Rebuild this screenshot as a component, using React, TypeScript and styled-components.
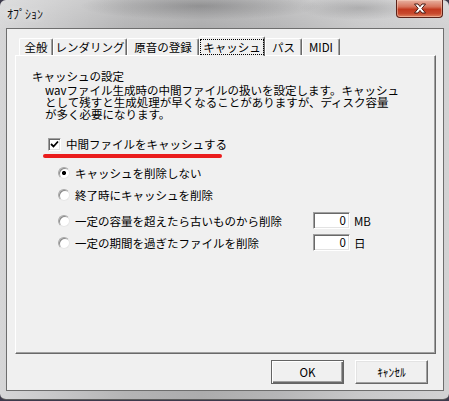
import styled, { createGlobalStyle } from "styled-components";

const GlobalStyle = createGlobalStyle`
  html, body {
    margin: 0;
    padding: 0;
    background: #3d3a4c;
  }
  body {
    font-family: "Noto Sans CJK JP", "Noto Sans", sans-serif;
    font-size: 11.5px;
    color: #000;
  }
`;

const tabs = [
  { label: "全般", width: 34 },
  { label: "レンダリング", width: 74 },
  { label: "原音の登録", width: 72 },
  { label: "キャッシュ", width: 66, active: true },
  { label: "パス", width: 37 },
  { label: "MIDI", width: 38 },
];

const radios = [
  { label: "キャッシュを削除しない", checked: true, top: 6 },
  { label: "終了時にキャッシュを削除", top: 5 },
  { label: "一定の容量を超えたら古いものから削除", top: 9, value: "0", unit: "MB" },
  { label: "一定の期間を過ぎたファイルを削除", top: 5, value: "0", unit: "日" },
];

function CloseGlyph() {
  return (
    <svg width="14" height="11" viewBox="0 0 14 11">
      <path
        d="M1.5 1 H5 L7 3.6 L9 1 H12.5 L8.8 5.5 L12.5 10 H9 L7 7.4 L5 10 H1.5 L5.2 5.5 Z"
        fill="#fff"
        stroke="#4a1a12"
        strokeWidth="1"
        strokeLinejoin="round"
      />
    </svg>
  );
}

function CheckGlyph() {
  return (
    <svg width="9" height="9" viewBox="0 0 9 9">
      <path d="M1 4 L3.5 6.5 L8 1.5" fill="none" stroke="#000" strokeWidth="1.8" />
    </svg>
  );
}

export default function App() {
  return (
    <>
      <GlobalStyle />
      <Window>
        <TitleBar>
          <Title>ｵﾌﾟｼｮﾝ</Title>
          <CloseButton>
            <CloseGlyph />
          </CloseButton>
        </TitleBar>
        <Client>
          <TabStrip>
            {tabs.map((t) => (
              <Tab key={t.label} $width={t.width} $active={!!t.active}>
                <TabLabel $active={!!t.active}>{t.label}</TabLabel>
              </Tab>
            ))}
          </TabStrip>
          <Panel>
            <GroupLabel>キャッシュの設定</GroupLabel>
            <Description>
              <DescLine>wavファイル生成時の中間ファイルの扱いを設定します。キャッシュ</DescLine>
              <DescLine>として残すと生成処理が早くなることがありますが、ディスク容量</DescLine>
              <DescLine>が多く必要になります。</DescLine>
            </Description>
            <CheckRow>
              <CheckBox>
                <CheckGlyph />
              </CheckBox>
              <span>中間ファイルをキャッシュする</span>
            </CheckRow>
            <Underline />
            {radios.map((r) => (
              <RadioRow key={r.label} $top={r.top}>
                <RadioOption>
                  <Radio $checked={!!r.checked} />
                  <span>{r.label}</span>
                </RadioOption>
                {r.value !== undefined && (
                  <>
                    <Edit>{r.value}</Edit>
                    <Unit>{r.unit}</Unit>
                  </>
                )}
              </RadioRow>
            ))}
          </Panel>
          <ButtonRow>
            <Button $default>OK</Button>
            <Button>ｷｬﾝｾﾙ</Button>
          </ButtonRow>
        </Client>
      </Window>
    </>
  );
}

const Window = styled.div`
  width: 449px;
  height: 400px;
  box-sizing: border-box;
  display: flex;
  flex-direction: column;
  border-radius: 6px;
  border-bottom: 1px solid #5c5c5c;
  overflow: hidden;
  background:
    radial-gradient(ellipse 120px 14px at 200px 6px, rgba(70, 70, 72, 0.35), rgba(70, 70, 72, 0)),
    radial-gradient(ellipse 60px 12px at 360px 8px, rgba(70, 70, 72, 0.25), rgba(70, 70, 72, 0)),
    linear-gradient(to bottom, rgba(255, 255, 255, 0.2), rgba(255, 255, 255, 0) 30px),
    linear-gradient(
      to right,
      #d6d6d7 0%,
      #c8c8c9 12%,
      #b4b4b5 28%,
      #acacad 45%,
      #b6b6b7 62%,
      #c8c8c9 80%,
      #d2d2d3 100%
    );
`;

const TitleBar = styled.div`
  height: 28px;
  display: flex;
  justify-content: space-between;
  align-items: flex-start;
  padding: 0 6px 0 7px;
  flex-shrink: 0;
`;

const Title = styled.div`
  margin-top: 7px;
  font-size: 12px;
  line-height: 14px;
  color: #111;
  text-shadow: 0 0 6px rgba(255, 255, 255, 0.9);
`;

const CloseButton = styled.div`
  width: 47px;
  height: 18px;
  box-sizing: border-box;
  display: flex;
  align-items: center;
  justify-content: center;
  border: 1px solid #5b2219;
  border-top: none;
  border-radius: 0 0 4px 4px;
  background: linear-gradient(
    to bottom,
    #e8b2a2 0%,
    #d7735b 40%,
    #c2391f 55%,
    #c84a2e 80%,
    #e08462 100%
  );
  box-shadow: inset 0 0 0 1px rgba(255, 220, 200, 0.45);
`;

const Client = styled.div`
  flex: 1;
  margin: 0 5px 8px 6px;
  border: 1px solid #6e6e6e;
  background: #f0f0f0;
  padding: 7px 7px 0 8px;
  display: flex;
  flex-direction: column;
`;

const TabStrip = styled.div`
  height: 19px;
  display: flex;
  align-items: flex-end;
  padding-left: 4px;
`;

const Tab = styled.div<{ $width: number; $active: boolean }>`
  width: ${(p) => p.$width}px;
  height: ${(p) => (p.$active ? 20 : 17)}px;
  margin-bottom: ${(p) => (p.$active ? -1 : 0)}px;
  position: relative;
  z-index: ${(p) => (p.$active ? 1 : 0)};
  box-sizing: border-box;
  display: flex;
  justify-content: center;
  align-items: ${(p) => (p.$active ? "flex-start" : "center")};
  padding-top: ${(p) => (p.$active ? 2 : 0)}px;
  background: #f0f0f0;
  border-top: 1px solid #fff;
  border-left: 1px solid #fff;
  border-right: 1px solid #696969;
  border-radius: 2px 2px 0 0;
  box-shadow: inset -1px 0 0 #a0a0a0;
  line-height: 14px;
  white-space: nowrap;
`;

const TabLabel = styled.span<{ $active: boolean }>`
  padding: 0 2px;
  border: 1px dotted ${(p) => (p.$active ? "#000" : "transparent")};
`;

const Panel = styled.div`
  width: 421px;
  height: 299px;
  box-sizing: border-box;
  border-top: 1px solid #fff;
  border-left: 1px solid #fff;
  border-right: 1px solid #696969;
  border-bottom: 1px solid #696969;
  box-shadow: inset -1px -1px 0 #a0a0a0;
  padding: 14px 0 0 16px;
  display: flex;
  flex-direction: column;
  align-items: flex-start;
`;

const GroupLabel = styled.div`
  height: 13px;
  line-height: 13px;
`;

const Description = styled.div`
  margin: 1px 0 0 13px;
  display: flex;
  flex-direction: column;
  white-space: nowrap;
`;

const DescLine = styled.div`
  height: 12px;
  line-height: 12px;
`;

const CheckRow = styled.div`
  margin: 18px 0 0 16px;
  height: 13px;
  display: flex;
  align-items: center;
  gap: 5px;
  line-height: 13px;
`;

const CheckBox = styled.div`
  width: 13px;
  height: 13px;
  box-sizing: border-box;
  display: flex;
  align-items: center;
  justify-content: center;
  background: #fff;
  border: 1px solid;
  border-color: #a0a0a0 #fff #fff #a0a0a0;
  box-shadow: inset 1px 1px 0 #696969, inset -1px -1px 0 #e3e3e3;
`;

const Underline = styled.div`
  margin: 3px 0 0 11px;
  width: 179px;
  height: 4px;
  border-radius: 2px;
  background: #ea1c1c;
`;

const RadioRow = styled.div<{ $top: number }>`
  margin: ${(p) => p.$top}px 0 0 26px;
  height: 17px;
  display: flex;
  align-items: center;
  line-height: 14px;
`;

const RadioOption = styled.div`
  width: 255px;
  display: flex;
  align-items: center;
  gap: 5px;
`;

const Radio = styled.div<{ $checked: boolean }>`
  width: 12px;
  height: 12px;
  box-sizing: border-box;
  border-radius: 50%;
  border: 1px solid;
  border-color: #a8a8a8 #e6e6e6 #e6e6e6 #a8a8a8;
  background: ${(p) =>
    p.$checked
      ? "radial-gradient(circle, #000 0 2px, #fff 2.2px)"
      : "#fff"};
  box-shadow: inset 1px 1px 0 #8a8a8a;
`;

const Edit = styled.div`
  width: 37px;
  height: 17px;
  box-sizing: border-box;
  background: #fff;
  border: 1px solid;
  border-color: #a0a0a0 #fff #fff #a0a0a0;
  box-shadow: inset 1px 1px 0 #696969, inset -1px -1px 0 #e3e3e3;
  text-align: right;
  padding-right: 3px;
  line-height: 15px;
`;

const Unit = styled.span`
  margin-left: 4px;
`;

const ButtonRow = styled.div`
  margin: 6px 8px 0 0;
  display: flex;
  justify-content: flex-end;
  gap: 11px;
`;

const Button = styled.div<{ $default?: boolean }>`
  width: 73px;
  height: 24px;
  box-sizing: border-box;
  display: flex;
  align-items: center;
  justify-content: center;
  background: #f0f0f0;
  border: 1px solid;
  border-color: ${(p) =>
    p.$default ? "#646464" : "#fff #696969 #696969 #fff"};
  box-shadow: ${(p) =>
    p.$default
      ? "inset 1px 1px 0 #fff, inset -1px -1px 0 #696969, inset -2px -2px 0 #a0a0a0"
      : "inset -1px -1px 0 #a0a0a0, inset 1px 1px 0 #e3e3e3"};
`;
